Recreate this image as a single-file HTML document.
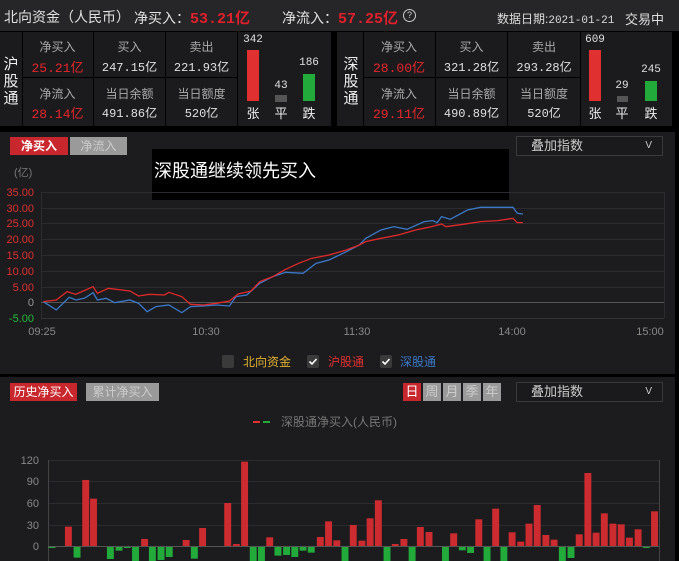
<!DOCTYPE html><html><head><meta charset="utf-8"><style>
*{margin:0;padding:0;box-sizing:border-box}
body{width:679px;height:561px;background:#000;font-family:"Liberation Sans","Noto Sans CJK SC",sans-serif;position:relative;overflow:hidden;color:#ddd}
.a{position:absolute;white-space:nowrap}
.c{text-align:center}
.lb{color:#aaa;font-size:12px}
.v{color:#e0e0e0;font-size:12px;font-family:"Liberation Mono","Noto Sans CJK SC",monospace}
.r{color:#e8262b !important}
.pn{position:absolute;background:#1b1b1e}
.btn{position:absolute;font-size:12px;text-align:center;line-height:18px}
</style></head><body>
<div class="a" style="left:0;top:0;width:679px;height:31px;background:#262628"></div>
<div class="a" style="left:4px;top:7px;font-size:14px;color:#e0e0e0">北向资金（人民币）</div>
<div class="a" style="left:134px;top:7px;font-size:14px;color:#e0e0e0">净买入：<span style="color:#e0202a;font-weight:bold;font-size:15px;font-family:'Liberation Mono','Noto Sans CJK SC',monospace">53.21亿</span></div>
<div class="a" style="left:282px;top:7px;font-size:14px;color:#e0e0e0">净流入：<span style="color:#e0202a;font-weight:bold;font-size:15px;font-family:'Liberation Mono','Noto Sans CJK SC',monospace">57.25亿</span></div>
<div class="a" style="left:403px;top:9px;width:13px;height:13px;border:1.5px solid #ccc;border-radius:50%;font-size:9px;line-height:10px;text-align:center;color:#ccc">?</div>
<div class="a" style="left:497px;top:10px;font-size:12px;color:#ddd">数据日期:<span style="font-family:'Liberation Mono',monospace;font-size:11px">2021-01-21</span></div>
<div class="a" style="left:625px;top:9px;font-size:13px;color:#ddd">交易中</div>

<div class="pn" style="left:0;top:32px;width:331px;height:94px"></div>
<div class="a" style="left:22px;top:32px;width:1px;height:94px;background:#000"></div>
<div class="a" style="left:93px;top:32px;width:1px;height:94px;background:#000"></div>
<div class="a" style="left:165px;top:32px;width:1px;height:94px;background:#000"></div>
<div class="a" style="left:237px;top:32px;width:1px;height:94px;background:#000"></div>
<div class="a" style="left:22px;top:77px;width:215px;height:1px;background:#000"></div>
<div class="a c" style="left:0;top:56px;width:22px;font-size:15px;line-height:17px;color:#eee;white-space:normal">沪股通</div>
<div class="a c lb" style="left:22px;top:38px;width:71px">净买入</div>
<div class="a c v r" style="left:22px;top:57px;width:71px;font-size:13px">25.21亿</div>
<div class="a c lb" style="left:94px;top:38px;width:71px">买入</div>
<div class="a c v" style="left:94px;top:58px;width:71px">247.15亿</div>
<div class="a c lb" style="left:166px;top:38px;width:71px">卖出</div>
<div class="a c v" style="left:166px;top:58px;width:71px">221.93亿</div>
<div class="a c lb" style="left:22px;top:85px;width:71px">净流入</div>
<div class="a c v r" style="left:22px;top:103px;width:71px;font-size:13px">28.14亿</div>
<div class="a c lb" style="left:94px;top:85px;width:71px">当日余额</div>
<div class="a c v" style="left:94px;top:104px;width:71px">491.86亿</div>
<div class="a c lb" style="left:166px;top:85px;width:71px">当日额度</div>
<div class="a c v" style="left:166px;top:104px;width:71px">520亿</div>
<div class="a c v" style="left:240px;top:34px;width:26px;font-size:11px">342</div>
<div class="a" style="left:247px;top:50px;width:12px;height:51px;background:#e03030"></div>
<div class="a c v" style="left:268px;top:80px;width:26px;font-size:11px">43</div>
<div class="a" style="left:275px;top:95px;width:12px;height:7px;background:#555"></div>
<div class="a c v" style="left:296px;top:57px;width:26px;font-size:11px">186</div>
<div class="a" style="left:303px;top:74px;width:12px;height:27px;background:#22aa3a"></div>
<div class="a c" style="left:240px;top:103px;width:26px;font-size:13px;color:#eee">张</div>
<div class="a c" style="left:268px;top:103px;width:26px;font-size:13px;color:#eee">平</div>
<div class="a c" style="left:296px;top:103px;width:26px;font-size:13px;color:#eee">跌</div>

<div class="pn" style="left:337px;top:32px;width:335px;height:94px"></div>
<div class="a" style="left:363px;top:32px;width:1px;height:94px;background:#000"></div>
<div class="a" style="left:435px;top:32px;width:1px;height:94px;background:#000"></div>
<div class="a" style="left:507px;top:32px;width:1px;height:94px;background:#000"></div>
<div class="a" style="left:580px;top:32px;width:1px;height:94px;background:#000"></div>
<div class="a" style="left:363px;top:77px;width:217px;height:1px;background:#000"></div>
<div class="a c" style="left:340px;top:56px;width:22px;font-size:15px;line-height:17px;color:#eee;white-space:normal">深股通</div>
<div class="a c lb" style="left:363px;top:38px;width:72px">净买入</div>
<div class="a c v r" style="left:363px;top:57px;width:72px;font-size:13px">28.00亿</div>
<div class="a c lb" style="left:436px;top:38px;width:71px">买入</div>
<div class="a c v" style="left:436px;top:58px;width:71px">321.28亿</div>
<div class="a c lb" style="left:508px;top:38px;width:72px">卖出</div>
<div class="a c v" style="left:508px;top:58px;width:72px">293.28亿</div>
<div class="a c lb" style="left:363px;top:85px;width:72px">净流入</div>
<div class="a c v r" style="left:363px;top:103px;width:72px;font-size:13px">29.11亿</div>
<div class="a c lb" style="left:436px;top:85px;width:71px">当日余额</div>
<div class="a c v" style="left:436px;top:104px;width:71px">490.89亿</div>
<div class="a c lb" style="left:508px;top:85px;width:72px">当日额度</div>
<div class="a c v" style="left:508px;top:104px;width:72px">520亿</div>
<div class="a c v" style="left:582px;top:34px;width:26px;font-size:11px">609</div>
<div class="a" style="left:589px;top:50px;width:12px;height:51px;background:#e03030"></div>
<div class="a c v" style="left:609px;top:80px;width:26px;font-size:11px">29</div>
<div class="a" style="left:617px;top:96px;width:11px;height:6px;background:#555"></div>
<div class="a c v" style="left:638px;top:64px;width:26px;font-size:11px">245</div>
<div class="a" style="left:645px;top:81px;width:12px;height:20px;background:#22aa3a"></div>
<div class="a c" style="left:582px;top:103px;width:26px;font-size:13px;color:#eee">张</div>
<div class="a c" style="left:609px;top:103px;width:26px;font-size:13px;color:#eee">平</div>
<div class="a c" style="left:638px;top:103px;width:26px;font-size:13px;color:#eee">跌</div>

<div class="pn" style="left:0;top:132px;width:675px;height:242px;background:#1c1c1f"></div>
<div class="btn" style="left:10px;top:137px;width:58px;background:#c8282d;color:#fff;font-weight:bold">净买入</div>
<div class="btn" style="left:70px;top:137px;width:57px;background:#9a9a9a;color:#ccc">净流入</div>
<div class="a" style="left:516px;top:136px;width:147px;height:20px;border:1px solid #3a3a3a;background:#1a1a1c;font-size:13px;color:#ccc;padding-left:14px;line-height:18px">叠加指数<span style="position:absolute;right:10px;top:0;font-size:10px">V</span></div>
<div class="a" style="left:152px;top:149px;width:357px;height:51px;background:#000"></div>
<div class="a" style="left:154px;top:157px;font-size:18px;color:#fff">深股通继续领先买入</div>
<div class="a" style="left:14px;top:164px;font-size:11px;color:#777">(亿)</div>
<svg class="a" style="left:0;top:0" width="679" height="561">
<g font-family="Liberation Sans" font-size="11" fill="#e03030" text-anchor="end">
<text x="34" y="196">35.00</text><text x="34" y="212">30.00</text><text x="34" y="227">25.00</text><text x="34" y="243">20.00</text><text x="34" y="259">15.00</text><text x="34" y="275">10.00</text><text x="34" y="291">5.00</text><text x="34" y="306" fill="#999">0</text><text x="34" y="322" fill="#22bb3a">-5.00</text>
</g>
<g stroke="#2c2c30" stroke-width="1">
<line x1="41" y1="192.5" x2="664" y2="192.5"/><line x1="41" y1="208.5" x2="664" y2="208.5"/><line x1="41" y1="223.5" x2="664" y2="223.5"/><line x1="41" y1="239.5" x2="664" y2="239.5"/><line x1="41" y1="255.5" x2="664" y2="255.5"/><line x1="41" y1="271.5" x2="664" y2="271.5"/><line x1="41" y1="287.5" x2="664" y2="287.5"/>
<line x1="41.5" y1="192" x2="41.5" y2="318"/><line x1="664.5" y1="192" x2="664.5" y2="318"/>
</g>
<line x1="41" y1="302.5" x2="664" y2="302.5" stroke="#555"/>
<line x1="41" y1="318.5" x2="664" y2="318.5" stroke="#333"/>
<g font-family="Liberation Sans" font-size="11" fill="#888" text-anchor="middle">
<text x="42" y="335">09:25</text><text x="206" y="335">10:30</text><text x="357" y="335">11:30</text><text x="512" y="335">14:00</text><text x="650" y="335">15:00</text>
</g>
<g transform="translate(0,130) scale(0.4329,0.3333)" fill="none" stroke-width="1.3">
<polyline vector-effect="non-scaling-stroke" stroke="#3a78c8" points="100,515 130,540 160,502 175,510 195,505 215,488 225,510 245,505 265,518 300,510 320,520 340,545 360,530 390,525 420,548 440,530 470,528 500,525 530,528 545,500 570,495 600,460 630,440 660,427 700,430 730,400 760,390 800,365 830,345 845,325 880,300 910,290 940,298 980,275 1000,272 1010,278 1020,260 1040,268 1080,240 1110,232 1150,232 1185,232 1195,250 1208,252"/>
<polyline vector-effect="non-scaling-stroke" stroke="#e02a2a" points="100,515 130,510 155,485 175,493 215,470 225,490 250,475 300,483 320,498 345,493 380,495 390,487 420,500 440,523 470,525 500,520 530,513 550,492 580,483 600,455 630,440 660,418 690,400 720,385 760,375 800,360 830,345 845,335 880,325 920,315 960,300 990,292 1020,282 1030,290 1070,283 1110,275 1150,272 1185,265 1195,278 1208,278"/>
</g>
<rect x="222" y="355" width="12" height="13" rx="2" fill="#3a3a3a"/>
<text x="243" y="366" font-size="12" fill="#e0b030" font-family="Noto Sans CJK SC">北向资金</text>
<rect x="307" y="355" width="12" height="13" rx="2" fill="#3a3a3a"/>
<path d="M309.5 361.5l2.5 2.5 4.5-5" stroke="#fff" stroke-width="1.6" fill="none"/>
<text x="328" y="366" font-size="12" fill="#e03030" font-family="Noto Sans CJK SC">沪股通</text>
<rect x="380" y="355" width="12" height="13" rx="2" fill="#3a3a3a"/>
<path d="M382.5 361.5l2.5 2.5 4.5-5" stroke="#fff" stroke-width="1.6" fill="none"/>
<text x="400" y="366" font-size="12" fill="#3a78c8" font-family="Noto Sans CJK SC">深股通</text>
</svg>

<div class="pn" style="left:0;top:377px;width:675px;height:184px;background:#1c1c1f"></div>
<div class="btn" style="left:10px;top:383px;width:67px;background:#c8282d;color:#fff">历史净买入</div>
<div class="btn" style="left:86px;top:383px;width:73px;background:#9a9a9a;color:#ccc">累计净买入</div>
<div class="btn" style="left:403px;top:383px;width:18px;background:#c8282d;color:#fff;font-size:13px">日</div>
<div class="btn" style="left:423px;top:383px;width:18px;background:#9a9a9a;color:#ccc;font-size:13px">周</div>
<div class="btn" style="left:443px;top:383px;width:18px;background:#9a9a9a;color:#ccc;font-size:13px">月</div>
<div class="btn" style="left:463px;top:383px;width:18px;background:#9a9a9a;color:#ccc;font-size:13px">季</div>
<div class="btn" style="left:483px;top:383px;width:18px;background:#9a9a9a;color:#ccc;font-size:13px">年</div>
<div class="a" style="left:516px;top:382px;width:147px;height:20px;border:1px solid #3a3a3a;background:#1a1a1c;font-size:13px;color:#ccc;padding-left:14px;line-height:18px">叠加指数<span style="position:absolute;right:10px;top:0;font-size:10px">V</span></div>
<div class="a" style="left:253px;top:421px;width:7px;height:2px;background:#e03030"></div>
<div class="a" style="left:263px;top:421px;width:7px;height:2px;background:#22aa3a"></div>
<div class="a" style="left:281px;top:413px;font-size:12px;color:#777">深股通净买入(人民币)</div>
<svg class="a" style="left:0;top:0" width="679" height="561">
<g font-family="Liberation Sans" font-size="11" fill="#888" text-anchor="end">
<text x="39" y="464">120</text><text x="39" y="485">90</text><text x="39" y="507">60</text><text x="39" y="529">30</text><text x="39" y="550">0</text>
</g>
<g stroke="#2c2c30"><line x1="48" y1="460.5" x2="659" y2="460.5"/><line x1="48" y1="481.5" x2="659" y2="481.5"/><line x1="48" y1="503.5" x2="659" y2="503.5"/><line x1="48" y1="525.5" x2="659" y2="525.5"/><line x1="48.5" y1="460" x2="48.5" y2="561" stroke="#444"/><line x1="659.5" y1="460" x2="659.5" y2="561" stroke="#444"/></g>
<g transform="translate(0,375) scale(0.4329,0.3333)">
<g fill="#cc2b30">
<rect x="150" y="455" width="16" height="58"/><rect x="190" y="315" width="16" height="198"/><rect x="208" y="371" width="16" height="142"/><rect x="326" y="492" width="16" height="21"/><rect x="422" y="495" width="16" height="18"/><rect x="460" y="459" width="16" height="54"/><rect x="518" y="384" width="16" height="129"/><rect x="538" y="507" width="16" height="6"/><rect x="557" y="260" width="16" height="253"/><rect x="615" y="487" width="16" height="26"/><rect x="732" y="486" width="16" height="27"/><rect x="751" y="439" width="16" height="74"/><rect x="770" y="496" width="16" height="17"/><rect x="808" y="450" width="16" height="63"/><rect x="828" y="497" width="16" height="16"/><rect x="847" y="430" width="16" height="83"/><rect x="866" y="376" width="16" height="137"/><rect x="905" y="507" width="16" height="6"/><rect x="925" y="492" width="16" height="21"/><rect x="963" y="456" width="16" height="57"/><rect x="983" y="471" width="16" height="42"/><rect x="1040" y="475" width="16" height="38"/><rect x="1098" y="433" width="16" height="80"/><rect x="1137" y="401" width="16" height="112"/><rect x="1175" y="472" width="16" height="41"/><rect x="1195" y="500" width="16" height="13"/><rect x="1214" y="446" width="16" height="67"/><rect x="1233" y="390" width="16" height="123"/><rect x="1253" y="480" width="16" height="33"/><rect x="1272" y="494" width="16" height="19"/><rect x="1330" y="478" width="16" height="35"/><rect x="1350" y="294" width="16" height="219"/><rect x="1369" y="473" width="16" height="40"/><rect x="1388" y="415" width="16" height="98"/><rect x="1408" y="446" width="16" height="67"/><rect x="1427" y="448" width="16" height="65"/><rect x="1446" y="488" width="16" height="25"/><rect x="1466" y="463" width="16" height="50"/><rect x="1504" y="409" width="16" height="104"/>
</g>
<g fill="#22aa3a">
<rect x="112" y="513" width="16" height="6"/><rect x="170" y="513" width="16" height="35"/><rect x="247" y="513" width="16" height="39"/><rect x="267" y="513" width="16" height="14"/><rect x="286" y="513" width="16" height="6"/><rect x="305" y="513" width="16" height="45"/><rect x="344" y="513" width="16" height="45"/><rect x="364" y="513" width="16" height="42"/><rect x="383" y="513" width="16" height="33"/><rect x="403" y="513" width="16" height="3"/><rect x="441" y="513" width="16" height="38"/><rect x="577" y="513" width="16" height="45"/><rect x="596" y="513" width="16" height="45"/><rect x="634" y="513" width="16" height="29"/><rect x="654" y="513" width="16" height="27"/><rect x="673" y="513" width="16" height="33"/><rect x="692" y="513" width="16" height="14"/><rect x="711" y="513" width="16" height="20"/><rect x="789" y="513" width="16" height="45"/><rect x="886" y="513" width="16" height="45"/><rect x="944" y="513" width="16" height="45"/><rect x="1021" y="513" width="16" height="45"/><rect x="1060" y="513" width="16" height="13"/><rect x="1079" y="513" width="16" height="21"/><rect x="1117" y="513" width="16" height="45"/><rect x="1156" y="513" width="16" height="45"/><rect x="1291" y="513" width="16" height="45"/><rect x="1311" y="513" width="16" height="36"/><rect x="1485" y="513" width="16" height="6"/>
</g>
</g>
<line x1="48" y1="546.5" x2="659" y2="546.5" stroke="#555"/>
</svg>
</body></html>
